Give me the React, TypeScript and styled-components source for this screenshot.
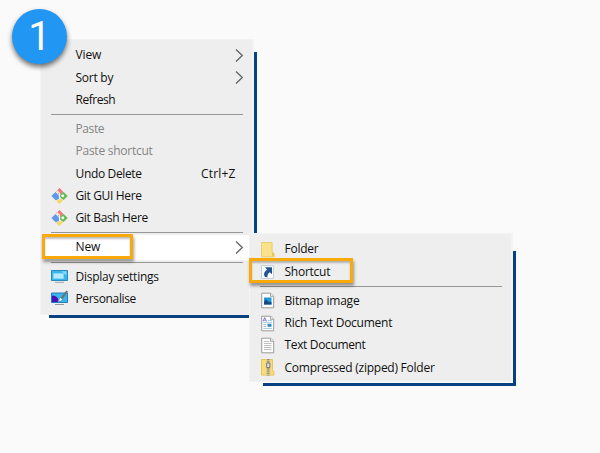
import React from 'react';
import styled, { createGlobalStyle } from 'styled-components';

const GlobalStyle = createGlobalStyle`
  body { margin: 0; background: #fafafa; overflow: hidden; }
  * { box-sizing: border-box; }
`;

const Desktop = styled.main`
  position: relative;
  width: 600px;
  height: 453px;
  background: #fafafa;
  font-family: 'Open Sans', 'Noto Sans', sans-serif;
  font-size: 12px;
  color: #111;
`;

const Menu = styled.div<{ $x: number; $y: number; $w: number; $h: number; $top: number; $left: number; $gap: number }>`
  position: absolute;
  left: ${p => p.$x}px;
  top: ${p => p.$y}px;
  width: ${p => p.$w}px;
  height: ${p => p.$h}px;
  padding-top: 4.3px;
  background: #eeeeee;
  border: solid #f3f3f3;
  border-width: 1px 2px 1px 1px;
  &::after {
    content: '';
    position: absolute;
    left: ${p => p.$left}px;
    top: ${p => p.$top}px;
    right: -5px;
    bottom: ${p => -p.$gap - 4}px;
    border: solid #07417f;
    border-width: 0 3px 3px 0;
  }
`;

const Row = styled.div<{ $muted?: boolean; $active?: boolean }>`
  display: flex;
  align-items: center;
  height: 22.25px;
  padding: 0 8px 0 10px;
  color: ${p => (p.$muted ? '#858585' : 'inherit')};
  ${p => p.$active && 'background: #fff; box-shadow: 0 -1px #fff, 0 1px #fff; margin: 0 3px 0 2px; padding: 0 5px 0 8px;'}
`;

const Slot = styled.span`
  display: flex;
  width: 18px;
  margin-right: 6.5px;
  flex: none;
`;

const Label = styled.span<{ $ls: number }>`
  flex: 1;
  line-height: 18px;
  white-space: nowrap;
  letter-spacing: ${p => p.$ls}px;
`;

const Keys = styled.span`
  margin-right: 8.5px;
  line-height: 18px;
  letter-spacing: 0.15px;
`;

const Rule = styled.div`
  height: 1px;
  margin: 3px 9px 3px 10px;
  background: #969696;
`;

const Highlight = styled.div<{ $x: number; $y: number; $w: number; $h: number }>`
  position: absolute;
  left: ${p => p.$x}px;
  top: ${p => p.$y}px;
  width: ${p => p.$w}px;
  height: ${p => p.$h}px;
  border: 3px solid #faa90b;
  box-shadow: 1px 3px 3px rgba(0, 0, 0, 0.38), inset 0 2px 2px rgba(0, 0, 0, 0.25);
`;

const Step = styled.div`
  position: absolute;
  left: 12px;
  top: 9px;
  width: 55px;
  height: 55px;
  border-radius: 50%;
  background: #2196f3;
  box-shadow: 0 3px 5px rgba(0, 0, 0, 0.55);
  color: #fff;
  font: 40px/56px Roboto, Arial, sans-serif;
  text-align: center;
`;

const Chevron = () => (
  <svg width="9" height="15" viewBox="0 0 9 15" fill="none" stroke="#62626a" strokeWidth="1.3">
    <path d="M1 1.5 7.3 7.5 1 13.5" />
  </svg>
);

const Git = () => (
  <svg width="17" height="16" viewBox="0 0 17 16">
    <path d="M8.5 0 12.4 4 8.5 7.5 6.8 5.8 8 4.5 5.2 3.3Z" fill="#f0777b" />
    <path d="M4.5 4 8 7.7V11L4.7 12.2.4 8Z" fill="#6397ea" />
    <path d="m12.7 4 4 4-4.1 4.1-4-3.2 1-3Z" fill="#62b951" />
    <path d="m8.2 9 3.9 3.5L8.3 16 5 12.7l3.3-1.2Z" fill="#f6d768" />
    <path d="m6 2.7 2.5 2.5v6" fill="none" stroke="#f4f4f4" strokeWidth="1.2" />
    <circle cx="11.8" cy="7.8" r="1.5" fill="#f3f6ef" />
  </svg>
);

const Display = () => (
  <svg width="17" height="15" viewBox="0 0 17 15">
    <path d="M.5 1.5h16v10H.5Z" fill="#38b6ec" stroke="#2789bd" />
    <path d="M2.5 4.5h10v5h-10Z" fill="#b5eaff" stroke="#80d5f8" />
    <path d="M10 2.3h5.5v4Z" fill="#83d9f7" />
    <path d="M4 13.3h9" stroke="#99a5aa" />
  </svg>
);

const Personalise = () => (
  <svg width="18" height="17" viewBox="0 0 18 17">
    <path d="M.5 3h16v9.5H.5Z" fill="#38b6ec" stroke="#267dbd" />
    <path d="M1 5.5c2.5 0 5 1 6 3.3.7 1.6 0 3.2-1 3.2H1Z" fill="#4711ba" />
    <path d="m15.5.5 1.5 1-5.7 8-2-1.5Z" fill="#68737a" />
    <path d="m9.5 7.5 2 1.6c-.3 2.2-2.5 2.5-4.3 2 1.2-.6.8-2.8 2.3-3.6Z" fill="#eef5f7" stroke="#51708a" strokeWidth=".5" />
    <path d="M4 14.5h9" stroke="#8f999e" />
  </svg>
);

const Folder = () => (
  <svg width="16" height="17" viewBox="0 0 16 17">
    <path d="M1.5 1.5h10.6v10l2 .7v3.7H1.5Z" fill="#fae28b" stroke="#e9ce75" />
    <path d="M12 11.5v4h2v-3Z" fill="#e9c95f" />
  </svg>
);

const Shortcut = () => (
  <svg width="16" height="16" viewBox="0 0 16 16">
    <path d="M1.5 1.5h12v13h-12Z" fill="#f9fbfc" stroke="#c4d0d9" />
    <path d="M5 3.3h7v7L9.8 8.2c-2 1.2-2.4 2.7-2.4 5L5 12.9C3 10 4.6 7.2 7.2 5.7Z" fill="#205792" />
  </svg>
);

const Page = ({ children }: { children: React.ReactNode }) => (
  <svg width="16" height="17" viewBox="0 0 16 17">
    <path d="M1.7 1.2h9l3 3v11.6h-12Z" fill="#fcfcfc" stroke="#9c9c9c" />
    <path d="M10.5 1.2v3.2h3.2" fill="#eee" stroke="#a7a7a7" />
    {children}
  </svg>
);

const Bitmap = () => (
  <Page>
    <path d="M4 5.5h7.5v7H4Z" fill="#2297dc" />
    <path d="M4 10 6.2 7.5 9 10.5l1.2-1 1.3 1v2H4Z" fill="#114983" />
  </Page>
);

const RichText = () => (
  <Page>
    <path d="m3 6.5 1.8-4 1.8 4M3.8 5.2h2.3" fill="none" stroke="#8b80dc" />
    <path d="M8 5.5h4M3.5 7.5H12M3.5 13.5H12" stroke="#a9cfe2" />
    <path d="M7.5 8.8h4v3h-4Z" fill="#318bc5" />
    <path d="M3.5 9.5H6M3.5 11.5H6" stroke="#a0c2cf" />
  </Page>
);

const TextFile = () => (
  <Page>
    <path d="M4 4.5h5M4 6.5h7.5M4 8.5h7.5M4 10.5h7.5M4 12.5h7.5" stroke="#b0b0b0" strokeWidth=".8" />
  </Page>
);

const Zip = () => (
  <svg width="16" height="17" viewBox="0 0 16 17">
    <path d="M1.5.5h11v11l1.4.7v3.9H1.5Z" fill="#f9dc76" stroke="#e8c45a" />
    <path d="M6 0h4.5v16.5H6Z" fill="#ddcc93" />
    <path d="M8.3 0v16.5" stroke="#8d8673" strokeWidth="2.2" strokeDasharray="1.3 1" />
    <path d="M6.7 4h3.2v4.5H6.7Z" fill="#ddd" stroke="#777b7d" />
  </svg>
);

type ItemProps = {
  text: string;
  icon?: React.ReactNode;
  ls?: number;
  keys?: string;
  muted?: boolean;
  active?: boolean;
  arrow?: boolean;
};

const Item = ({ text, icon, ls = -0.25, keys, muted, active, arrow }: ItemProps) => (
  <Row $muted={muted} $active={active}>
    <Slot>{icon}</Slot>
    <Label $ls={ls}>{text}</Label>
    {keys && <Keys>{keys}</Keys>}
    {arrow && <Chevron />}
  </Row>
);

export default function App() {
  return (
    <>
      <GlobalStyle />
      <Desktop>
        <Menu $x={40} $y={39} $w={214} $h={276} $left={8} $top={12} $gap={0}>
          <Item text="View" ls={-0.1} arrow />
          <Item text="Sort by" arrow />
          <Item text="Refresh" ls={-0.45} />
          <Rule />
          <Item text="Paste" ls={-0.4} muted />
          <Item text="Paste shortcut" muted />
          <Item text="Undo Delete" ls={-0.35} keys="Ctrl+Z" />
          <Item text="Git GUI Here" ls={-0.35} icon={<Git />} />
          <Item text="Git Bash Here" ls={-0.35} icon={<Git />} />
          <Rule />
          <Item text="New" ls={-0.1} active arrow />
          <Rule />
          <Item text="Display settings" icon={<Display />} />
          <Item text="Personalise" ls={-0.35} icon={<Personalise />} />
        </Menu>
        <Menu $x={249} $y={233} $w={264} $h={149} $left={13} $top={17} $gap={1}>
          <Item text="Folder" icon={<Folder />} />
          <Item text="Shortcut" icon={<Shortcut />} />
          <Rule />
          <Item text="Bitmap image" ls={-0.2} icon={<Bitmap />} />
          <Item text="Rich Text Document" icon={<RichText />} />
          <Item text="Text Document" ls={-0.35} icon={<TextFile />} />
          <Item text="Compressed (zipped) Folder" icon={<Zip />} />
        </Menu>
        <Highlight $x={42} $y={234} $w={91} $h={25} />
        <Highlight $x={249} $y={258} $w={104} $h={25} />
        <Step>1</Step>
      </Desktop>
    </>
  );
}
